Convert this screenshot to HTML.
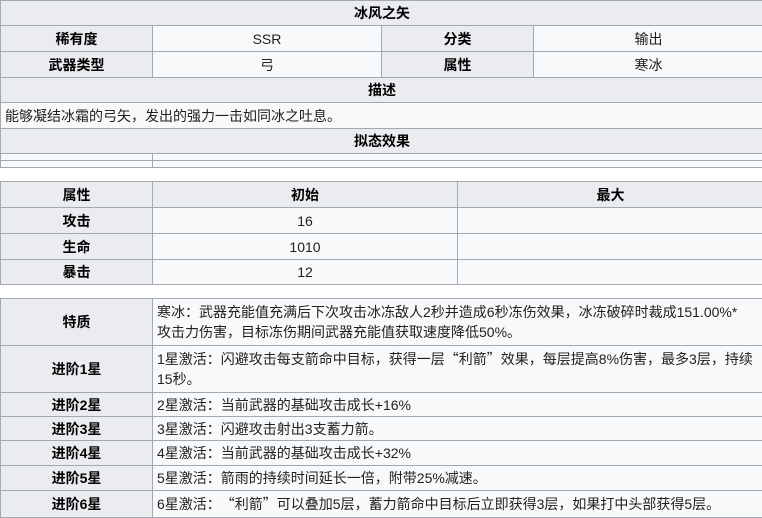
<!DOCTYPE html>
<html><head><meta charset="utf-8"><style>
body{margin:0;width:762px;height:517px;overflow:hidden;background:#fff;position:relative;font-family:"Liberation Sans","Noto Sans CJK SC",sans-serif;font-size:14px;color:#202122}
.c{position:absolute;box-sizing:border-box;border:1px solid #a2a9b1;background:#f8f9fa;display:flex;align-items:center;justify-content:center;line-height:20px;white-space:nowrap}
.h{background:#eaecf0;font-weight:bold;color:#000}
.l{justify-content:flex-start;padding-left:4px}
.q{font-family:"Noto Sans CJK SC",sans-serif}
</style></head><body>
<div class="c h" style="left:0;top:0;width:764px;height:26px">冰风之矢</div>
<div class="c h" style="left:0;top:25px;width:153px;height:27px">稀有度</div>
<div class="c" style="left:152px;top:25px;width:230px;height:27px">SSR</div>
<div class="c h" style="left:381px;top:25px;width:153px;height:27px">分类</div>
<div class="c" style="left:533px;top:25px;width:231px;height:27px">输出</div>
<div class="c h" style="left:0;top:51px;width:153px;height:27px">武器类型</div>
<div class="c" style="left:152px;top:51px;width:230px;height:27px">弓</div>
<div class="c h" style="left:381px;top:51px;width:153px;height:27px">属性</div>
<div class="c" style="left:533px;top:51px;width:231px;height:27px">寒冰</div>
<div class="c h" style="left:0;top:77px;width:764px;height:26px">描述</div>
<div class="c l" style="left:0;top:102px;width:764px;height:27px">能够凝结冰霜的弓矢，发出的强力一击如同冰之吐息。</div>
<div class="c h" style="left:0;top:128px;width:764px;height:26px">拟态效果</div>
<div class="c" style="left:0;top:153px;width:153px;height:8px"></div>
<div class="c" style="left:152px;top:153px;width:612px;height:8px"></div>
<div class="c" style="left:0;top:160px;width:153px;height:8px"></div>
<div class="c" style="left:152px;top:160px;width:612px;height:8px"></div>

<div class="c h" style="left:0;top:181px;width:153px;height:27px">属性</div>
<div class="c h" style="left:152px;top:181px;width:306px;height:27px">初始</div>
<div class="c h" style="left:457px;top:181px;width:307px;height:27px">最大</div>
<div class="c h" style="left:0;top:207px;width:153px;height:27px">攻击</div>
<div class="c" style="left:152px;top:207px;width:306px;height:27px">16</div>
<div class="c" style="left:457px;top:207px;width:307px;height:27px"></div>
<div class="c h" style="left:0;top:233px;width:153px;height:27px">生命</div>
<div class="c" style="left:152px;top:233px;width:306px;height:27px">1010</div>
<div class="c" style="left:457px;top:233px;width:307px;height:27px"></div>
<div class="c h" style="left:0;top:259px;width:153px;height:26px">暴击</div>
<div class="c" style="left:152px;top:259px;width:306px;height:26px">12</div>
<div class="c" style="left:457px;top:259px;width:307px;height:26px"></div>

<div class="c h" style="left:0;top:298px;width:153px;height:48px">特质</div>
<div class="c l" style="left:152px;top:298px;width:612px;height:48px"><div>寒冰：武器充能值充满后下次攻击冰冻敌人2秒并造成6秒冻伤效果，冰冻破碎时裁成151.00%*<br>攻击力伤害，目标冻伤期间武器充能值获取速度降低50%。</div></div>
<div class="c h" style="left:0;top:345px;width:153px;height:48px">进阶1星</div>
<div class="c l" style="left:152px;top:345px;width:612px;height:48px"><div>1星激活：闪避攻击每支箭命中目标，获得一层<span class="q">“</span>利箭<span class="q">”</span>效果，每层提高8%伤害，最多3层，持续<br>15秒。</div></div>
<div class="c h" style="left:0;top:392px;width:153px;height:25px">进阶2星</div>
<div class="c l" style="left:152px;top:392px;width:612px;height:25px">2星激活：当前武器的基础攻击成长+16%</div>
<div class="c h" style="left:0;top:416px;width:153px;height:25px">进阶3星</div>
<div class="c l" style="left:152px;top:416px;width:612px;height:25px">3星激活：闪避攻击射出3支蓄力箭。</div>
<div class="c h" style="left:0;top:440px;width:153px;height:26px">进阶4星</div>
<div class="c l" style="left:152px;top:440px;width:612px;height:26px">4星激活：当前武器的基础攻击成长+32%</div>
<div class="c h" style="left:0;top:465px;width:153px;height:26px">进阶5星</div>
<div class="c l" style="left:152px;top:465px;width:612px;height:26px">5星激活：箭雨的持续时间延长一倍，附带25%减速。</div>
<div class="c h" style="left:0;top:490px;width:153px;height:28px">进阶6星</div>
<div class="c l" style="left:152px;top:490px;width:612px;height:28px">6星激活：<span class="q">“</span>利箭<span class="q">”</span>可以叠加5层，蓄力箭命中目标后立即获得3层，如果打中头部获得5层。</div>
</body></html>
